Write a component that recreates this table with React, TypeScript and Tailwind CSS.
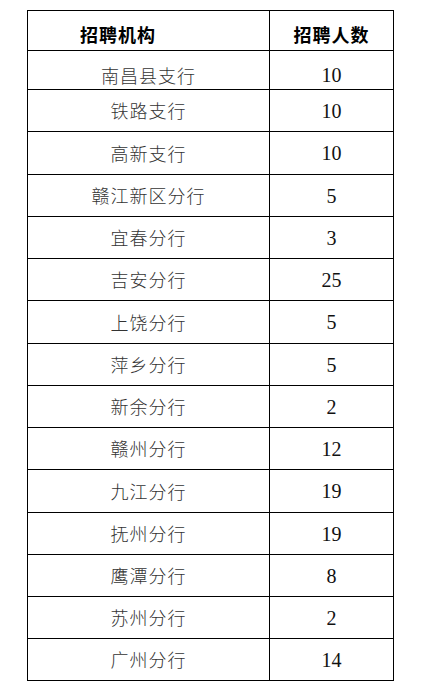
const rows = [
  { name: "南昌县支行", count: 10, h: "h-[39px]", first: true },
  { name: "铁路支行", count: 10, h: "h-[42px]" },
  { name: "高新支行", count: 10, h: "h-[43px]" },
  { name: "赣江新区分行", count: 5, h: "h-[42px]" },
  { name: "宜春分行", count: 3, h: "h-[42px]" },
  { name: "吉安分行", count: 25, h: "h-[42px]" },
  { name: "上饶分行", count: 5, h: "h-[43px]" },
  { name: "萍乡分行", count: 5, h: "h-[42px]" },
  { name: "新余分行", count: 2, h: "h-[42px]" },
  { name: "赣州分行", count: 12, h: "h-[42px]" },
  { name: "九江分行", count: 19, h: "h-[43px]" },
  { name: "抚州分行", count: 19, h: "h-[42px]" },
  { name: "鹰潭分行", count: 8, h: "h-[42px]" },
  { name: "苏州分行", count: 2, h: "h-[42px]" },
  { name: "广州分行", count: 14, h: "h-[42px]" },
];

const cjk = "font-['Noto_Sans_CJK_SC',sans-serif]";

export default function App() {
  return (
    <div className="h-[692px] w-[446px] bg-white pt-[10px] pl-[27px]">
      <div className="w-[367px] border-l border-t border-black">
        {/* header */}
        <div className="flex h-[40px]">
          <div
            className={`flex w-[242px] items-center border-b border-r border-black pl-[52px] pt-[8px] text-[18px] font-bold tracking-[1px] text-black ${cjk}`}
          >
            招聘机构
          </div>
          <div
            className={`flex flex-1 items-center justify-center border-b border-r border-black pt-[8px] text-[18px] font-bold tracking-[1px] text-black ${cjk}`}
          >
            招聘人数
          </div>
        </div>

        {rows.map((r) => (
          <div key={r.name} className={`flex ${r.h}`}>
            <div
              className={`flex w-[242px] items-center justify-center border-b border-r border-black text-[18px] font-light tracking-[1px] text-[#333] ${cjk} ${
                r.first ? "pt-[10px]" : ""
              }`}
            >
              {r.name}
            </div>
            <div
              className={`flex flex-1 items-center justify-center border-b border-r border-black font-['Liberation_Serif',serif] text-[20px] text-[#111] ${
                r.first ? "pt-[10px]" : ""
              }`}
            >
              {r.count}
            </div>
          </div>
        ))}
      </div>
    </div>
  );
}
